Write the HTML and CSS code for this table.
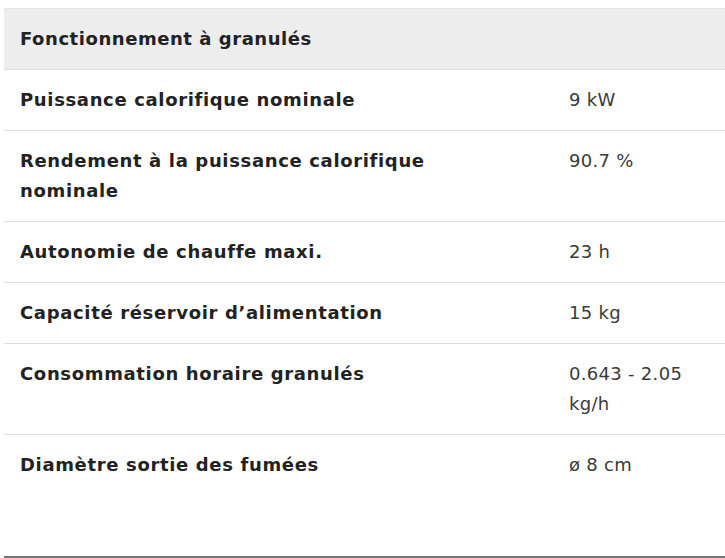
FILE: index.html
```html
<!DOCTYPE html>
<html lang="fr">
<head>
<meta charset="utf-8">
<link rel="stylesheet" href="styles.css">
</head>
<body>
<div class="page">
  <section class="specs">
    <div class="head">Fonctionnement à granulés</div>
    <div class="row"><div class="label">Puissance calorifique nominale</div><div class="value">9 kW</div></div>
    <div class="row"><div class="label">Rendement à la puissance calorifique nominale</div><div class="value">90.7 %</div></div>
    <div class="row"><div class="label">Autonomie de chauffe maxi.</div><div class="value">23 h</div></div>
    <div class="row"><div class="label">Capacité réservoir d’alimentation</div><div class="value">15 kg</div></div>
    <div class="row"><div class="label">Consommation horaire granulés</div><div class="value">0.643 - 2.05 kg/h</div></div>
    <div class="row last"><div class="label">Diamètre sortie des fumées</div><div class="value">ø 8 cm</div></div>
  </section>
  <div class="rule"></div>
</div>
</body>
</html>
```
FILE: styles.css
```css
html, body {
  margin: 0;
  padding: 0;
  background: #fff;
  overflow: hidden;
}
.page {
  padding: 8px 0 0 4px;
}
.specs {
  width: 721px;
  font-family: "DejaVu Sans", sans-serif;
  font-size: 18px;
  line-height: 30px;
  color: #222;
}
.head {
  background: #ededed;
  font-weight: bold;
  letter-spacing: 0.55px;
  padding: 15px 16px;
  border-top: 1px solid #e4e4e4;
  border-bottom: 1px solid #dedede;
}
.row {
  display: grid;
  grid-template-columns: 549px 172px;
  border-bottom: 1px solid #dcdde0;
}
.label {
  font-weight: bold;
  letter-spacing: 0.65px;
  padding: 15px 100px 15px 16px;
}
.value {
  font-weight: normal;
  color: #3a3a3a;
  letter-spacing: 0.3px;
  padding: 15px 16px;
}
.row.last {
  border-bottom: none;
  min-height: 121px;
}
.rule {
  height: 2px;
  background: #777;
}
```
